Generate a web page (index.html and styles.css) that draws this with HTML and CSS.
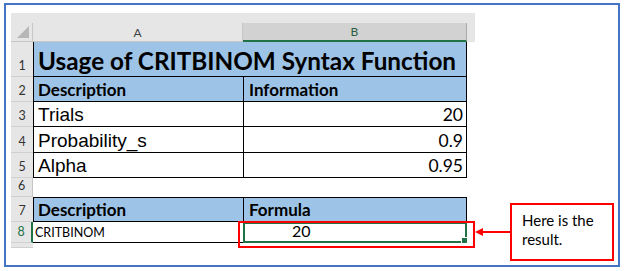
FILE: index.html
```html
<!DOCTYPE html>
<html>
<head>
<meta charset="utf-8">
<link rel="stylesheet" href="styles.css">
</head>
<body>
<div class="frame">
  <div class="sheet">
    <div class="band"></div>
    <div class="row colhdr">
      <div class="corner"><span class="tri"></span></div>
      <div class="ch cha">A</div>
      <div class="ch chb">B</div>
      <div class="ch tail"></div>
    </div>
    <div class="row r1">
      <div class="rh">1</div>
      <div class="c merged title">Usage of CRITBINOM Syntax Function</div>
    </div>
    <div class="row r2">
      <div class="rh">2</div>
      <div class="c a blue bold">Description</div>
      <div class="c b blue bold">Information</div>
    </div>
    <div class="row r3">
      <div class="rh">3</div>
      <div class="c a arial">Trials</div>
      <div class="c b num">20</div>
    </div>
    <div class="row r4">
      <div class="rh">4</div>
      <div class="c a arial">Probability_s</div>
      <div class="c b num">0.9</div>
    </div>
    <div class="row r5">
      <div class="rh">5</div>
      <div class="c a arial">Alpha</div>
      <div class="c b num">0.95</div>
    </div>
    <div class="row r6">
      <div class="rh">6</div>
      <div class="c empty"></div>
    </div>
    <div class="row r7">
      <div class="rh">7</div>
      <div class="c a blue bold">Description</div>
      <div class="c b blue bold">Formula</div>
    </div>
    <div class="row r8">
      <div class="rh sel">8</div>
      <div class="c a small">CRITBINOM</div>
      <div class="c b active">20<span class="handle"></span></div>
    </div>
    <div class="row stub"><div class="rh"></div></div>
  </div>

  <div class="redbox"></div>
  <div class="arrow">
    <svg width="38" height="10" viewBox="0 0 38 10">
      <polygon points="0,5 8,1 8,9" fill="#ff0000"/>
      <line x1="6" y1="5" x2="38" y2="5" stroke="#ff0000" stroke-width="2"/>
    </svg>
  </div>
  <div class="callout">Here is the<br>result.</div>
</div>
</body>
</html>
```

FILE: styles.css
```css
html, body {
  margin: 0;
  padding: 0;
  background: #ffffff;
}

.frame {
  position: relative;
  margin: 3px 0 0 4px;
  width: 616px;
  height: 264px;
  box-sizing: border-box;
  border: 2px solid #4472c4;
  padding: 8px 0 0 5px;
  font-family: Lato, "Liberation Sans", sans-serif;
  color: #000;
}

.sheet {
  width: 464px;
  display: flex;
  flex-direction: column;
}

.band {
  height: 10px;
  background: #e6e6e6;
}

.row {
  display: flex;
  box-sizing: border-box;
}

.colhdr { height: 19px; }
.r1 { height: 35px; }
.r2 { height: 25px; }
.r3 { height: 25px; }
.r4 { height: 26px; }
.r5 { height: 25px; }
.r6 { height: 19px; }
.r7 { height: 25px; }
.r8 { height: 21px; }
.stub { height: 3px; }

.corner {
  width: 22px;
  box-sizing: border-box;
  background: #e6e6e6;
  border-right: 1px solid #c6c6c6;
  border-bottom: 1px solid #c6c6c6;
  position: relative;
}
.tri {
  position: absolute;
  right: 3px;
  bottom: 3px;
  width: 0;
  height: 0;
  border-left: 12px solid transparent;
  border-bottom: 12px solid #b7b7b7;
}

.ch {
  box-sizing: border-box;
  background: #e6e6e6;
  font-size: 12px;
  color: #444;
  display: flex;
  align-items: center;
  justify-content: center;
  border-bottom: 1px solid #c6c6c6;
}
.cha { width: 210px; border-right: 1px solid #c6c6c6; }
.chb {
  width: 224px;
  background: #d2d2d2;
  color: #2b5e3e;
  border-right: 1px solid #ababab;
  border-bottom: 2px solid #217346;
}
.tail { width: 8px; border-bottom: none; }

.rh {
  width: 22px;
  flex: none;
  box-sizing: border-box;
  background: #e6e6e6;
  border-bottom: 1px solid #d0d0d0;
  font-size: 12.5px;
  color: #333;
  display: flex;
  align-items: flex-end;
  justify-content: center;
  padding-bottom: 4px;
  line-height: 1;
}
.rh.sel {
  color: #217346;
  border-right: 2px solid #217346;
}
.r6 .rh { border-right: 1px solid #c6c6c6; }

.c {
  box-sizing: border-box;
  display: flex;
  align-items: flex-end;
  line-height: 1;
  border-bottom: 1px solid #000;
}
.a {
  width: 210px;
  border-left: 1px solid #000;
  padding-left: 4px;
}
.b {
  width: 224px;
  border-left: 1px solid #000;
  border-right: 1px solid #000;
  padding-left: 5px;
}
.merged {
  width: 434px;
  border-left: 1px solid #000;
  border-right: 1px solid #000;
  background: #9dc3e6;
  padding-left: 4px;
}
.title {
  font-weight: 700;
  font-size: 24.3px;
  padding-bottom: 3px;
}
.blue { background: #9dc3e6; }
.bold {
  font-weight: 700;
  font-size: 17px;
  padding-bottom: 3px;
}
.arial {
  font-family: "Liberation Sans", Arial, sans-serif;
  font-size: 19px;
  padding-bottom: 2px;
}
.num {
  justify-content: flex-end;
  padding-right: 3px;
  font-size: 17.5px;
  padding-bottom: 3px;
}
.empty {
  width: 434px;
  border-bottom: none;
}
.r7 .c { border-top: 1px solid #000; }
.r8 .a { border-left: none; }
.small {
  font-size: 12.5px;
  padding-left: 2px;
  padding-bottom: 3px;
}
.active {
  position: relative;
  border: 2px solid #217346;
  padding-left: 47px;
  padding-bottom: 2px;
  font-size: 16px;
}
.handle {
  position: absolute;
  right: -3px;
  bottom: -3px;
  width: 5px;
  height: 5px;
  background: #217346;
  border: 1px solid #fff;
}

.redbox {
  position: absolute;
  left: 232px;
  top: 216px;
  width: 237px;
  height: 27px;
  box-sizing: border-box;
  border: 2px solid #ff0000;
}
.arrow {
  position: absolute;
  left: 469px;
  top: 222px;
  line-height: 0;
}
.callout {
  position: absolute;
  left: 504px;
  top: 198px;
  width: 104px;
  height: 58px;
  box-sizing: border-box;
  border: 2px solid #ff0000;
  padding: 6px 0 0 10px;
  font-size: 15px;
  line-height: 19px;
  background: #fff;
}
```
